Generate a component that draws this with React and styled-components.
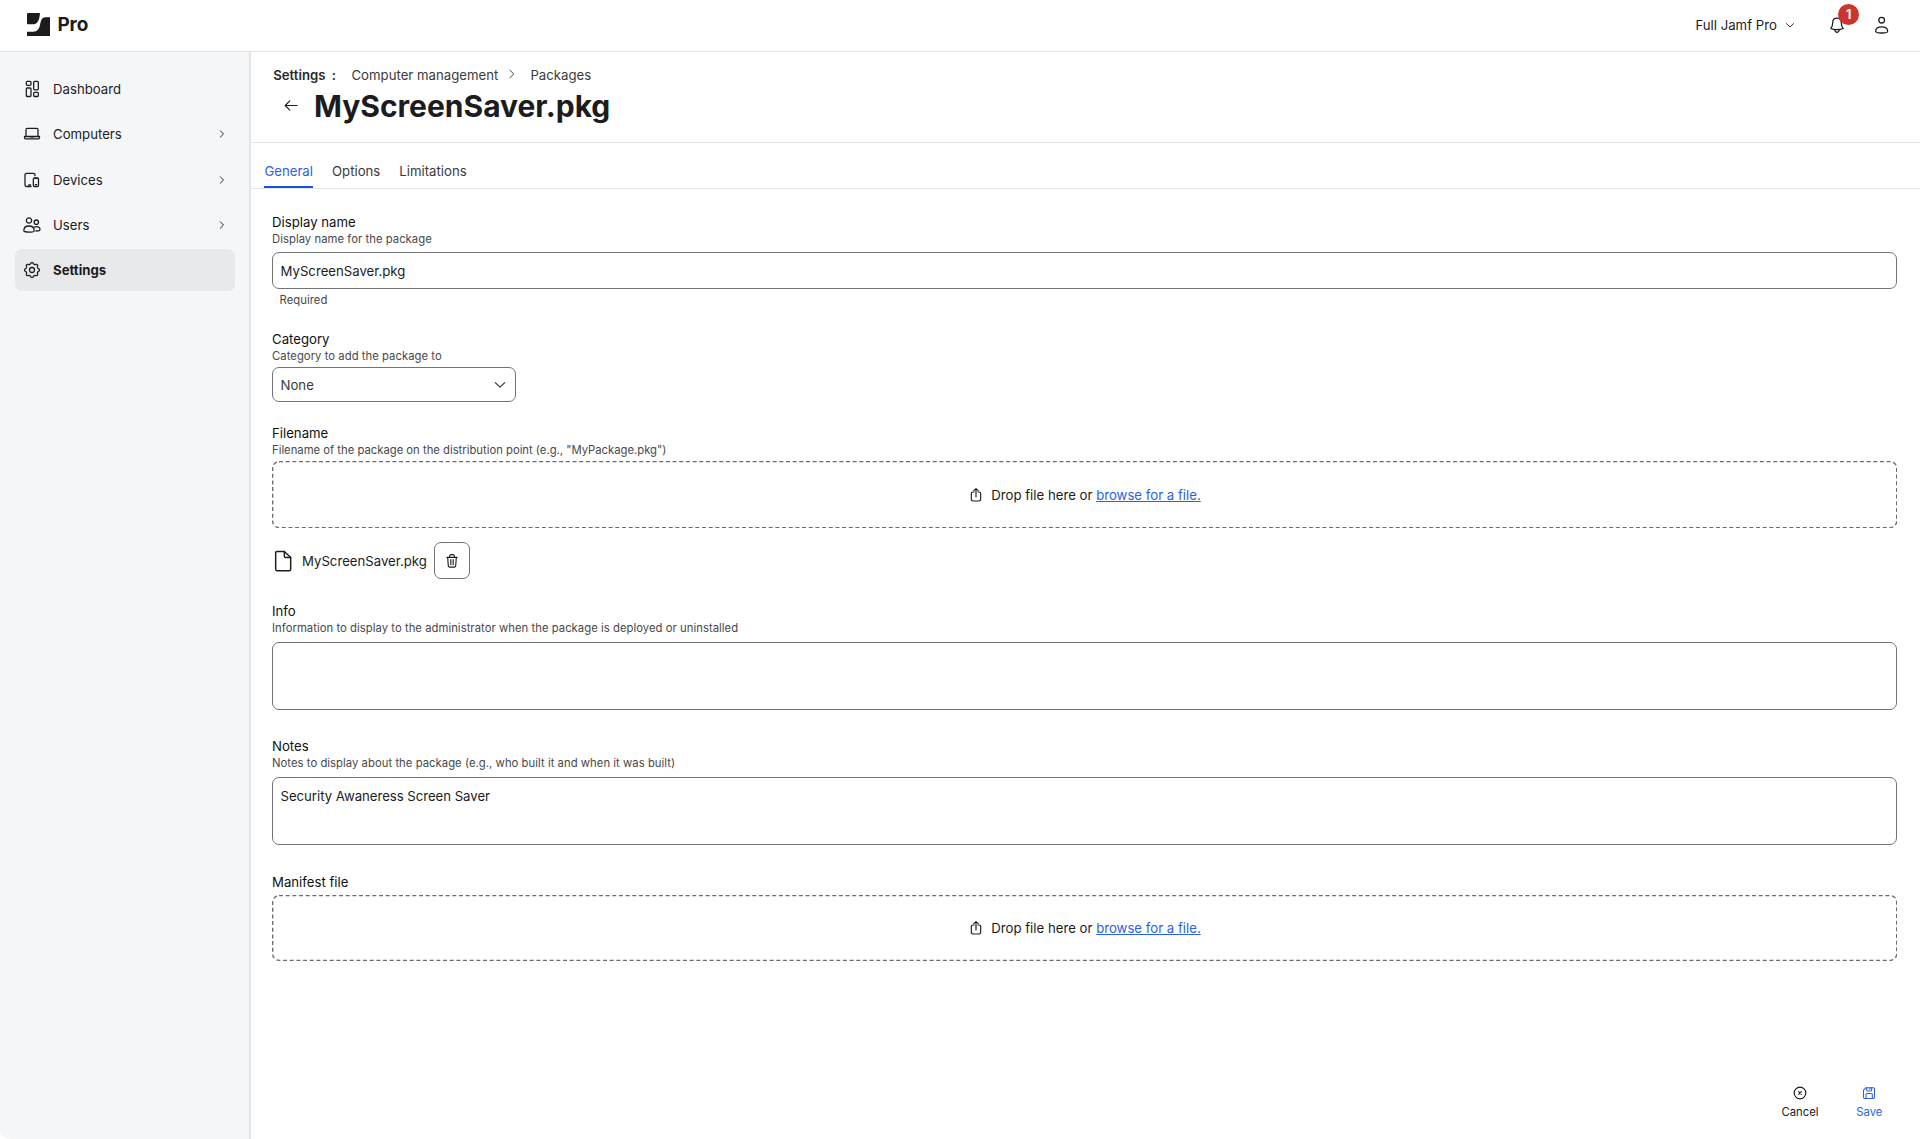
import React from "react";
import styled, { createGlobalStyle } from "styled-components";

const ink = "#1c1c1e";
const blue = "#2b5fe6";
const line = "#e3e4e6";
const stroke = "#727377";

const GlobalStyle = createGlobalStyle`
  *, *::before, *::after { box-sizing: border-box; }
  body {
    margin: 0;
    background: #fff;
    color: ${ink};
    font: 400 13.2px/16px Inter, "Liberation Sans", sans-serif;
  }
  input, textarea, button { font: inherit; color: inherit; margin: 0; }
`;

const Page = styled.div`
  display: flex;
  flex-direction: column;
  height: 1139px;
`;

const TopBar = styled.header`
  display: flex;
  align-items: center;
  justify-content: space-between;
  height: 52px;
  padding: 0 29.3px 2px 26.7px;
  border-bottom: 1px solid ${line};
`;

const Brand = styled.div`
  display: flex;
  align-items: center;
  gap: 7px;
  font-size: 18.9px;
  line-height: 22px;
  font-weight: 700;
`;

const Account = styled.div`
  display: flex;
  align-items: center;
`;

const SiteSwitch = styled.div`
  display: flex;
  align-items: center;
  gap: 7.5px;
  margin-right: 32px;
`;

const BellButton = styled.div`
  position: relative;
  display: flex;
  margin-right: 26.4px;
`;

const Badge = styled.span`
  position: absolute;
  left: 9.8px;
  top: -11.5px;
  width: 21px;
  height: 21px;
  border-radius: 50%;
  background: #cc3430;
  color: #fff;
  font-size: 12.5px;
  font-weight: 700;
  line-height: 21px;
  text-align: center;
`;

const Body = styled.div`
  display: flex;
  flex: 1;
  min-height: 0;
`;

const Sidebar = styled.nav`
  display: flex;
  flex-direction: column;
  gap: 3.25px;
  width: 251px;
  padding: 16px 14.5px 0 15px;
  background: #f5f6f8;
  border-right: 2px solid ${line};
  border-bottom-left-radius: 10px;
`;

const NavItem = styled.a`
  display: flex;
  align-items: center;
  gap: 12px;
  height: 42px;
  padding: 0 7px 0 8px;
  border-radius: 7px;
  background: ${(p) => (p.$active ? "#e8e9eb" : "transparent")};
  font-weight: ${(p) => (p.$active ? 700 : 400)};
`;

const NavLabel = styled.span`
  flex: 1;
`;

const Main = styled.main`
  display: flex;
  flex: 1;
  flex-direction: column;
  min-width: 0;
`;

const PageHead = styled.div`
  height: 91px;
  padding: 14px 22.2px 0;
  border-bottom: 1px solid ${line};
`;

const Crumbs = styled.div`
  display: flex;
  align-items: center;
  line-height: 18px;
  color: #3a3a3c;
`;

const CrumbRoot = styled.span`
  width: 78.3px;
  font-weight: 600;
  word-spacing: 3px;
  color: #2a2a2c;
`;

const CrumbArrow = styled.span`
  display: flex;
  margin: 0 12.8px 2px 7.3px;
`;

const TitleRow = styled.div`
  display: flex;
  align-items: center;
  gap: 15px;
  padding: 4px 0 0 9.8px;
`;

const Title = styled.h1`
  margin: 0;
  font-size: 30px;
  line-height: 36px;
  font-weight: 700;
`;

const Tabs = styled.div`
  display: flex;
  gap: 19px;
  height: 46px;
  padding: 20px 13.4px 0;
  border-bottom: 1px solid ${line};
`;

const Tab = styled.a`
  height: 25px;
  color: ${(p) => (p.$active ? blue : "#3a3a3c")};
  border-bottom: 2px solid ${(p) => (p.$active ? "#1a52d6" : "transparent")};
`;

const Form = styled.form`
  display: flex;
  flex: 1;
  flex-direction: column;
  padding: 25px 23px 19.5px 21px;
`;

const Field = styled.div`
  display: flex;
  flex-direction: column;
  margin-bottom: ${(p) => p.$after}px;
`;

const Label = styled.label`
  color: #111113;
`;

const Help = styled.span`
  font-size: 11.28px;
  line-height: 18px;
  letter-spacing: ${(p) => (p.$tight ? 0 : 0.045)}px;
  color: #48484b;
`;

const Hint = styled(Help)`
  margin-top: 3px;
  padding-left: 7.5px;
  line-height: 16px;
`;

const TextInput = styled.input`
  height: 37px;
  margin-top: 4px;
  padding: 1px 7.5px 0;
  border: 1px solid ${stroke};
  border-radius: 7px;
  outline: none;
`;

const TextBox = styled.textarea`
  height: 68px;
  margin-top: 5px;
  padding: 10px 7.5px;
  border: 1px solid ${stroke};
  border-radius: 7px;
  letter-spacing: -0.035px;
  resize: none;
  outline: none;
`;

const Select = styled.div`
  display: flex;
  align-items: center;
  justify-content: space-between;
  width: 244px;
  height: 35px;
  margin-top: 2px;
  padding: 0 8.4px 0 7.5px;
  border: 1px solid ${stroke};
  border-radius: 7px;
  color: #3a3a3c;
`;

const DropZone = styled.div`
  position: relative;
  display: flex;
  align-items: center;
  justify-content: center;
  height: ${(p) => p.$height}px;
  margin-top: ${(p) => p.$gap}px;
  padding-left: 1px;

  &::before {
    content: "";
    position: absolute;
    top: 0;
    left: 0;
    width: 150%;
    height: 150%;
    border: 2px dashed #6a6b6f;
    border-radius: 10.5px;
    transform: scale(0.66667);
    transform-origin: 0 0;
    pointer-events: none;
  }
`;

const DropText = styled.span`
  margin-left: 8px;
`;

const BrowseLink = styled.a`
  color: ${blue};
  text-decoration: underline;
`;

const FileRow = styled.div`
  display: flex;
  align-items: center;
  height: 37px;
  margin-top: 14px;
  padding-left: 2px;
`;

const FileName = styled.span`
  margin: 0 7px 0 10px;
`;

const IconButton = styled.button`
  display: flex;
  align-items: center;
  justify-content: center;
  width: 36px;
  height: 37px;
  padding: 0;
  border: 1px solid ${stroke};
  border-radius: 7px;
  background: #fff;
`;

const Actions = styled.div`
  display: flex;
  justify-content: flex-end;
  gap: 37.9px;
  margin-top: auto;
  padding-right: 14.6px;
`;

const Action = styled.a`
  display: flex;
  flex-direction: column;
  align-items: center;
  gap: 3.6px;
  font-size: 11.28px;
  color: ${(p) => (p.$primary ? blue : ink)};
`;

const Glyph = styled.svg`
  display: block;
  flex: none;
  fill: none;
  stroke: currentColor;
  stroke-linecap: round;
  stroke-linejoin: round;
`;

const Icon = ({ size = 18, weight = 3.8, children }) => (
  <Glyph
    width={size}
    height={size}
    viewBox={`0 0 ${size * 3} ${size * 3}`}
    strokeWidth={weight}
  >
    {children}
  </Glyph>
);

const gearPath = (() => {
  const points = [];
  for (let i = 0; i < 96; i++) {
    const a = (i / 96) * Math.PI * 2;
    const r = 20.2 + 2.2 * Math.tanh(1.6 * Math.cos(8 * a));
    points.push(
      `${(27 + r * Math.cos(a)).toFixed(2)} ${(27 + r * Math.sin(a)).toFixed(2)}`
    );
  }
  return `M${points.join("L")}Z`;
})();

const Logo = () => (
  <svg width="23.7" height="23.7" viewBox="80 38 71 71" fill={ink}>
    <path d="M83 38H119C117.500 50 117 57 112 64.500C108 70.500 104 72 98 72H83A3 3 0 0 1 80 69V41A3 3 0 0 1 83 38Z" />
    <path d="M136 51H148A3 3 0 0 1 151 54V106A3 3 0 0 1 148 109H83A3 3 0 0 1 80 106V94H98C112 94 116 86 119 74C122 60 124 51 136 51Z" />
  </svg>
);

const DashboardIcon = () => (
  <Icon>
    <rect x="10" y="4" width="14" height="12" rx="3" />
    <rect x="10" y="24" width="14" height="25.500" rx="3" />
    <rect x="32" y="4" width="14" height="25.500" rx="3" />
    <rect x="32" y="37" width="14" height="12.500" rx="3" />
  </Icon>
);

const LaptopIcon = () => (
  <Icon>
    <path d="M9 34V14a4 4 0 0 1 4-4H41a4 4 0 0 1 4 4V34" />
    <path d="M4.500 34.500H49.500V38a3.500 3.500 0 0 1-3.500 3.500H8A3.500 3.500 0 0 1 4.500 38Z" />
    <path d="M22 35.500h10" />
  </Icon>
);

const DevicesIcon = () => (
  <Icon>
    <path d="M24 46.500H10.500a4.500 4.500 0 0 1-4.500-4.500V11.500A4.500 4.500 0 0 1 10.500 7H31.500A4.500 4.500 0 0 1 36 11.500V14" />
    <path d="M17 42h6" />
    <rect x="31" y="21" width="15.500" height="25.500" rx="4" />
    <path d="M37 41h4M36 22h6" />
  </Icon>
);

const UsersIcon = () => (
  <Icon>
    <circle cx="18" cy="13.500" r="8" />
    <circle cx="40" cy="18.500" r="6.500" />
    <path d="M2.500 44C2.500 35.500 9 30 18 30S33.500 35.500 33.500 44C33.500 46.500 27 48.500 18 48.500S2.500 46.500 2.500 44Z" />
    <path d="M34 33.500C36 32.500 38 32 40 32C46.500 32 51 36 51 41C51 43.500 46 45 39 45" />
  </Icon>
);

const GearIcon = () => (
  <Icon>
    <path d={gearPath} />
    <circle cx="27" cy="27" r="7.500" />
  </Icon>
);

const ChevronRight = () => (
  <Icon size={12} weight={2.8}>
    <path d="M13 8.500L22.500 18L13 27.500" />
  </Icon>
);

const CrumbChevron = () => (
  <Icon size={12} weight={2.8}>
    <path d="M11.500 6.500L23.500 18L11.500 29.500" />
  </Icon>
);

const SmallChevronDown = () => (
  <Icon size={12} weight={2.8}>
    <path d="M7.500 14L18 24L28.500 14" />
  </Icon>
);

const SelectChevron = () => (
  <Icon size={14} weight={3.8}>
    <path d="M7 14L21 27.500L35 14" />
  </Icon>
);

const BellIcon = () => (
  <Icon>
    <path d="M8.500 37.500C13 33 14 29 14 21C14 12 19.500 6.500 27 6.500S40 12 40 21C40 29 41 33 45.500 37.500C40 40 34 41 27 41S14 40 8.500 37.500Z" />
    <path d="M20 42C21.500 47 24 49.500 27 49.500S32.500 47 34 42" />
  </Icon>
);

const UserIcon = () => (
  <Icon>
    <circle cx="26" cy="12.500" r="8.500" />
    <path d="M8 45.500C8 37 16 32.500 26 32.500S44 37 44 45.500C44 49 36 51 26 51S8 49 8 45.500Z" />
  </Icon>
);

const BackArrow = () => (
  <Icon size={16} weight={3.2}>
    <path d="M42 22.500H7M20.500 8.500L6.500 22.500L20.500 36.500" />
  </Icon>
);

const ShareIcon = () => (
  <Icon size={14} weight={3.4}>
    <path d="M15 12H12a5 5 0 0 0-5 5V34a5 5 0 0 0 5 5H30a5 5 0 0 0 5-5V17a5 5 0 0 0-5-5H27" />
    <path d="M21 27V2.500M14.500 8L21 2L27.500 8" />
  </Icon>
);

const FileIcon = () => (
  <Glyph width="18" height="22" viewBox="0 0 54 66" strokeWidth="4.4">
    <path d="M31 4.500H9A4 4 0 0 0 5 8.500V58A4 4 0 0 0 9 62H46A4 4 0 0 0 50 58V22.500Z" />
    <path d="M31 4.500V18.500A4 4 0 0 0 35 22.500H50" />
  </Glyph>
);

const TrashIcon = () => (
  <Icon size={14} weight={3.4}>
    <path d="M5.500 10H36.500M8 10.500L10 36A4 4 0 0 0 14 39.500H28A4 4 0 0 0 32 36L34 10.500" />
    <path d="M14 9.500V6A4 4 0 0 1 18 2H24A4 4 0 0 1 28 6V9.500M17.500 17V32M24.500 17V32" />
  </Icon>
);

const CancelIcon = () => (
  <Icon size={14} weight={3.4}>
    <circle cx="21" cy="21" r="17.500" />
    <path d="M17 17L25 25M25 17L17 25" />
  </Icon>
);

const SaveIcon = () => (
  <Icon size={14} weight={3.2}>
    <path d="M12 5H34A3.500 3.500 0 0 1 37.500 8.500V34A3.500 3.500 0 0 1 34 37.500H8A3.500 3.500 0 0 1 4.500 34V12.500Z" />
    <path d="M14 5V12A3 3 0 0 0 17 15H26A3 3 0 0 0 29 12V5M12 37V25.500A3 3 0 0 1 15 22.500H28A3 3 0 0 1 31 25.500V37M23.500 6V9.500" />
  </Icon>
);

const navItems = [
  { label: "Dashboard", Glyph: DashboardIcon },
  { label: "Computers", Glyph: LaptopIcon, nested: true },
  { label: "Devices", Glyph: DevicesIcon, nested: true },
  { label: "Users", Glyph: UsersIcon, nested: true },
  { label: "Settings", Glyph: GearIcon, active: true },
];

const FileDrop = ({ gap, height }) => (
  <DropZone $gap={gap} $height={height}>
    <ShareIcon />
    <DropText>
      Drop file here or <BrowseLink>browse for a file.</BrowseLink>
    </DropText>
  </DropZone>
);

export default function App() {
  return (
    <>
      <GlobalStyle />
      <Page>
        <TopBar>
          <Brand>
            <Logo />
            Pro
          </Brand>
          <Account>
            <SiteSwitch>
              Full Jamf Pro
              <SmallChevronDown />
            </SiteSwitch>
            <BellButton>
              <BellIcon />
              <Badge>1</Badge>
            </BellButton>
            <UserIcon />
          </Account>
        </TopBar>
        <Body>
          <Sidebar>
            {navItems.map(({ label, Glyph: NavGlyph, nested, active }) => (
              <NavItem key={label} $active={active}>
                <NavGlyph />
                <NavLabel>{label}</NavLabel>
                {nested && <ChevronRight />}
              </NavItem>
            ))}
          </Sidebar>
          <Main>
            <PageHead>
              <Crumbs>
                <CrumbRoot>Settings :</CrumbRoot>
                <span>Computer management</span>
                <CrumbArrow>
                  <CrumbChevron />
                </CrumbArrow>
                <span>Packages</span>
              </Crumbs>
              <TitleRow>
                <BackArrow />
                <Title>MyScreenSaver.pkg</Title>
              </TitleRow>
            </PageHead>
            <Tabs>
              <Tab $active>General</Tab>
              <Tab>Options</Tab>
              <Tab>Limitations</Tab>
            </Tabs>
            <Form>
              <Field $after={23}>
                <Label>Display name</Label>
                <Help>Display name for the package</Help>
                <TextInput defaultValue="MyScreenSaver.pkg" />
                <Hint>Required</Hint>
              </Field>
              <Field $after={23}>
                <Label>Category</Label>
                <Help>Category to add the package to</Help>
                <Select>
                  None
                  <SelectChevron />
                </Select>
              </Field>
              <Field $after={24}>
                <Label>Filename</Label>
                <Help $tight>
                  Filename of the package on the distribution point (e.g.,
                  "MyPackage.pkg")
                </Help>
                <FileDrop gap={2} height={67} />
                <FileRow>
                  <FileIcon />
                  <FileName>MyScreenSaver.pkg</FileName>
                  <IconButton type="button" aria-label="Delete">
                    <TrashIcon />
                  </IconButton>
                </FileRow>
              </Field>
              <Field $after={28}>
                <Label>Info</Label>
                <Help>
                  Information to display to the administrator when the package
                  is deployed or uninstalled
                </Help>
                <TextBox />
              </Field>
              <Field $after={29}>
                <Label>Notes</Label>
                <Help>
                  Notes to display about the package (e.g., who built it and
                  when it was built)
                </Help>
                <TextBox defaultValue="Security Awaneress Screen Saver" />
              </Field>
              <Field $after={0}>
                <Label>Manifest file</Label>
                <FileDrop gap={5} height={66} />
              </Field>
              <Actions>
                <Action>
                  <CancelIcon />
                  Cancel
                </Action>
                <Action $primary>
                  <SaveIcon />
                  Save
                </Action>
              </Actions>
            </Form>
          </Main>
        </Body>
      </Page>
    </>
  );
}
